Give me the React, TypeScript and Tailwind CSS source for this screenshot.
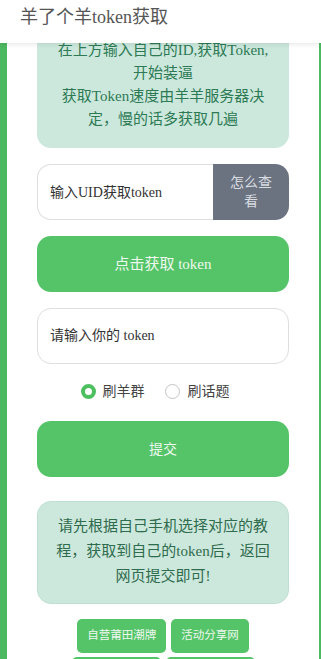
import React, { useState } from 'react'

const font = { fontFamily: '"Liberation Serif", "Noto Sans CJK SC", serif' }

const App: React.FC = () => {
  const [uid, setUid] = useState('')
  const [token, setToken] = useState('')
  const [mode, setMode] = useState<'group' | 'topic'>('group')

  const links = [
    ['自营莆田潮牌', '活动分享网'],
    ['羊了个羊攻略', '更多工具推荐']
  ]

  return (
    <div className="w-[321px] h-[659px] overflow-hidden bg-white" style={font}>
      {/* Header */}
      <div className="relative z-10 h-[43px] bg-white flex items-center pl-5 shadow-[0_2px_4px_rgba(0,0,0,0.08)]">
        <span className="text-[18px] text-[#555] leading-none -mt-[10px]">羊了个羊token获取</span>
      </div>

      <div className="border-l-[7px] border-r-[2px] border-[#4cb860] bg-white px-[30px] pb-10">
        {/* Info card */}
        <div className="-mt-4 rounded-[14px] bg-[#cce8dc] pt-3 pb-[17px] px-4 text-center text-[15px] leading-[23px] text-[#2d7a55]">
          在上方输入自己的ID,获取Token,
          <br />
          开始装逼
          <br />
          获取Token速度由羊羊服务器决
          <br />
          定，慢的话多获取几遍
        </div>

        {/* UID input */}
        <div className="mt-4 flex h-[56px]">
          <input
            value={uid}
            onChange={(e) => setUid(e.target.value)}
            placeholder="输入UID获取token"
            className="flex-1 min-w-0 rounded-l-[14px] border border-r-0 border-[#dedede] bg-white pl-[12px] text-[14px] text-[#333] placeholder:text-[#333] outline-none"
            style={font}
          />
          <button className="w-[76px] rounded-r-[14px] bg-[#6b7380] text-[14px] leading-[19px] text-[#d8dbe0] px-3">
            怎么查看
          </button>
        </div>

        {/* Get token */}
        <button className="mt-4 h-[56px] w-full rounded-[14px] bg-[#55c468] text-[15px] text-[#eef8ef]">
          点击获取 token
        </button>

        {/* Token input */}
        <input
          value={token}
          onChange={(e) => setToken(e.target.value)}
          placeholder="请输入你的 token"
          className="mt-4 block h-[56px] w-full rounded-[14px] border border-[#dedede] bg-white pl-[12px] text-[14px] text-[#333] placeholder:text-[#333] outline-none"
          style={font}
        />

        {/* Radio */}
        <div className="mt-4 flex h-[22px] items-center justify-center pr-4 text-[14px] text-[#444]">
          <label className="flex items-center cursor-pointer" onClick={() => setMode('group')}>
            <span
              className={
                mode === 'group'
                  ? 'h-[15px] w-[15px] rounded-full border-[4px] border-[#4cbf5f] bg-white'
                  : 'h-[15px] w-[15px] rounded-full border border-[#c4c4c4] bg-white'
              }
            />
            <span className="ml-[7px]">刷羊群</span>
          </label>
          <label className="ml-5 flex items-center cursor-pointer" onClick={() => setMode('topic')}>
            <span
              className={
                mode === 'topic'
                  ? 'h-[15px] w-[15px] rounded-full border-[4px] border-[#4cbf5f] bg-white'
                  : 'h-[15px] w-[15px] rounded-full border border-[#c4c4c4] bg-white'
              }
            />
            <span className="ml-2">刷话题</span>
          </label>
        </div>

        {/* Submit */}
        <button className="mt-[19px] h-[56px] w-full rounded-[14px] bg-[#55c468] text-[14px] text-[#eef8ef]">
          提交
        </button>

        {/* Notice */}
        <div className="mt-6 rounded-[14px] border border-[#bfe0d0] bg-[#cce8dc] pt-3 pb-[14px] px-4 text-center text-[15px] leading-[25px] text-[#2f6b4d]">
          请先根据自己手机选择对应的教
          <br />
          程，获取到自己的token后，返回
          <br />
          网页提交即可!
        </div>

        {/* Links */}
        <div className="mt-[15px] flex flex-col items-center gap-1">
          {links.map((row, i) => (
            <div key={i} className="flex gap-[5px]">
              {row.map((t) => (
                <button
                  key={t}
                  className="h-[34px] rounded-[5px] bg-[#55c468] px-[10px] text-[11.5px] text-[#eef8ef]"
                >
                  {t}
                </button>
              ))}
            </div>
          ))}
        </div>
      </div>
    </div>
  )
}

export default App
